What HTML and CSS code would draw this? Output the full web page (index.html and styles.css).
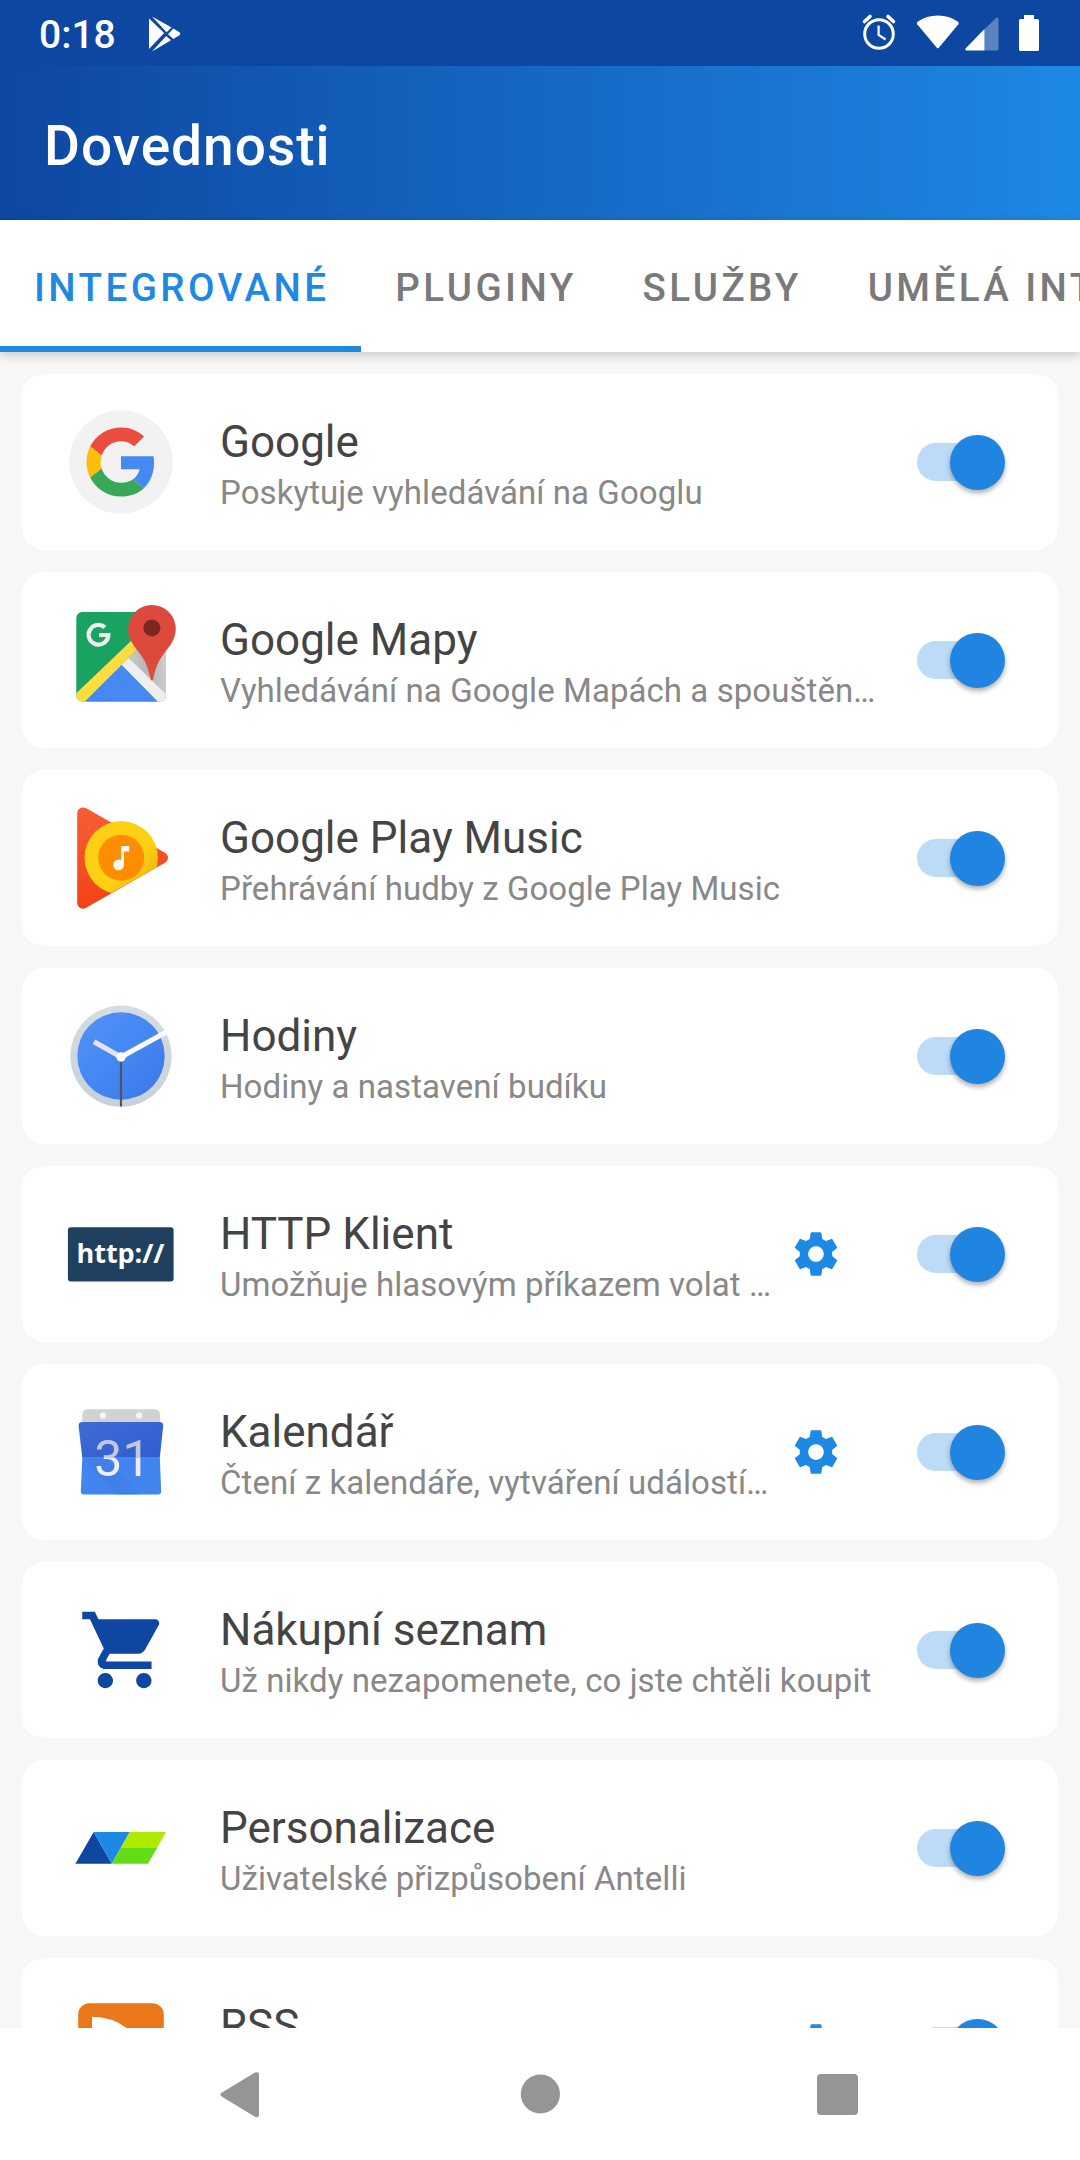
FILE: index.html
```html
<!DOCTYPE html>
<html lang="cs">
<head>
<meta charset="utf-8">
<title>Dovednosti</title>
<link rel="stylesheet" href="styles.css">
</head>
<body>
<svg class="defs" aria-hidden="true">
  <symbol id="gear" viewBox="0 0 24 24"><path d="M19.43 12.98c.04-.32.07-.64.07-.98s-.03-.66-.07-.98l2.11-1.65c.19-.15.24-.42.12-.64l-2-3.46c-.12-.22-.39-.3-.61-.22l-2.49 1c-.52-.4-1.08-.73-1.69-.98l-.38-2.65C14.46 2.18 14.25 2 14 2h-4c-.25 0-.46.18-.49.42l-.38 2.65c-.61.25-1.17.59-1.69.98l-2.49-1c-.23-.09-.49 0-.61.22l-2 3.46c-.13.22-.07.49.12.64l2.11 1.65c-.04.32-.07.65-.07.98s.03.66.07.98l-2.11 1.65c-.19.15-.24.42-.12.64l2 3.46c.12.22.39.3.61.22l2.49-1c.52.4 1.08.73 1.69.98l.38 2.65c.03.24.24.42.49.42h4c.25 0 .46-.18.49-.42l.38-2.65c.61-.25 1.17-.59 1.69-.98l2.49 1c.23.09.49 0 .61-.22l2-3.46c.12-.22.07-.49-.12-.64l-2.11-1.65zM12 15.6c-1.99 0-3.6-1.61-3.6-3.6s1.61-3.6 3.6-3.6 3.6 1.61 3.6 3.6-1.61 3.6-3.6 3.6z"/></symbol>
</svg>
<div class="screen">
  <div class="status">
    <span class="clock">0:18</span>
    <svg class="store" width="34" height="36" viewBox="0 0 34 36" fill="#fff"><path d="M1 2.5 16.2 17 1 33z"/><path d="M4 .6 23.6 11.6 18.6 16.2z"/><path d="M4 35.4 18.2 20 23 24.300z"/><path d="M25.400 12.600 31.500 16.300q1.800 1.400 0 2.900L25.400 23 20 18.200z"/></svg>
    <svg class="alarm" width="36" height="38" viewBox="0 0 36 38" fill="none" stroke="#fff"><circle cx="18" cy="21" r="14.300" stroke-width="3"/><path d="M17.600 12.500v9.500l7 4.500" stroke-width="2.200"/><path d="M3.500 8.500 9 3.500M32.500 8.500 27 3.500" stroke-width="3.600" stroke-linecap="round"/></svg>
    <svg class="wifi" width="44" height="34" viewBox="0 0 44 34" fill="#fff"><path d="M1.200 9.200Q.3 7.800 1.600 6.700 10.500.6 21.800.6T42 6.700q1.300 1.100.4 2.500L22.800 32.700q-1 1-2 0z"/></svg>
    <svg class="signal" width="34" height="34" viewBox="0 0 34 34" fill="#fff"><path d="M31.500.5Q33.500 0 33.500 1.500V32q0 1.500-1.500 1.500H19.500V12.300z" opacity=".32"/><path d="M19.500 12v21.500H1.500q-1.800-.5-1-2z"/></svg>
    <svg class="battery" width="20" height="36" viewBox="0 0 20 36" fill="#fff"><path d="M5 0h10v4h3.500Q20 4 20 5.500V34.500Q20 36 18.500 36h-17Q0 36 0 34.500V5.500Q0 4 1.500 4H5z"/></svg>
  </div>
  <header class="appbar"><h1>Dovednosti</h1></header>
  <nav class="tabs">
    <span class="tab active">INTEGROVANÉ</span><span class="tab">PLUGINY</span><span class="tab">SLUŽBY</span><span class="tab">UMĚLÁ INTELIGENCE</span>
  </nav>
  <main class="list">
    <section class="card">
      <svg class="icon" viewBox="0 0 110 110"><circle cx="55" cy="55" r="51.700" fill="#f2f2f2"/><g transform="translate(20.500 20.500) scale(1.4375)"><path fill="#ea4c3f" d="M24 9.500c3.540 0 6.710 1.220 9.210 3.600l6.850-6.850C35.900 2.380 30.470 0 24 0 14.620 0 6.510 5.380 2.560 13.220l7.980 6.190C12.430 13.720 17.740 9.500 24 9.500z"/><path fill="#4688f4" d="M46.980 24.550c0-1.570-.15-3.090-.38-4.550H24v9.020h12.940c-.58 2.960-2.260 5.480-4.780 7.180l7.730 6c4.510-4.180 7.090-10.360 7.090-17.650z"/><path fill="#fbbf0b" d="M10.530 28.590c-.48-1.450-.76-2.990-.76-4.590s.27-3.140.76-4.590l-7.980-6.190C.92 16.460 0 20.120 0 24c0 3.880.92 7.540 2.560 10.780l7.970-6.190z"/><path fill="#37a956" d="M24 48c6.480 0 11.930-2.130 15.890-5.810l-7.730-6c-2.150 1.450-4.920 2.300-8.160 2.300-6.260 0-11.570-4.220-13.470-9.910l-7.980 6.190C6.510 42.620 14.620 48 24 48z"/></g></svg>
      <div class="text"><h2>Google</h2><p>Poskytuje vyhledávání na Googlu</p></div>
      <i class="switch"></i>
    </section>
    <section class="card">
      <svg class="icon" viewBox="0 0 110 110">
        <defs><clipPath id="mapclip"><rect x="10.300" y="7" width="89.700" height="89.500" rx="6"/></clipPath><linearGradient id="mapgrey" x1="0" y1="0" x2="1" y2="0"><stop offset="0" stop-color="#c9c9c9"/><stop offset=".5" stop-color="#b5b5b5"/><stop offset="1" stop-color="#cdcdcd"/></linearGradient></defs>
        <g clip-path="url(#mapclip)"><rect x="10" y="7" width="90" height="90" fill="#1aa260"/><path d="M62.800 52.700 100 15v75z" fill="url(#mapgrey)"/><path d="M55.200 59.700 62.800 52.700 100 89.300V97h-8z" fill="#eee"/><path d="M19 97 55.200 59.700 91.800 97z" fill="#4688f4"/><path d="M10 88.500 66 35l5 9.500L18.500 97H10z" fill="#ffdc40"/></g>
        <path d="M39 22.300A9.900 9.900 0 1 0 42.400 30H33" fill="none" stroke="#eee" stroke-width="4.200"/>
        <path d="M85.900 0a23.900 23.900 0 0 0-23.900 23.900c0 10.500 6.500 17.300 12 24.900 6.500 8.800 8.600 15.700 10.700 25.700q1.200 2.200 2.400 0c2.100-10 4.200-16.900 10.700-25.700 5.500-7.600 12-14.400 12-24.900A23.900 23.900 0 0 0 85.900 0z" fill="#dd4a3d"/><circle cx="85.900" cy="23" r="8.500" fill="#7e2622"/>
      </svg>
      <div class="text"><h2>Google Mapy</h2><p>Vyhledávání na Google Mapách a spouštěn…</p></div>
      <i class="switch"></i>
    </section>
    <section class="card">
      <svg class="icon" viewBox="0 0 110 110">
        <defs><linearGradient id="pm" x1="0" y1="0" x2="0" y2="1"><stop offset="0" stop-color="#f65e35"/><stop offset="1" stop-color="#f44217"/></linearGradient><linearGradient id="py" x1="0" y1="0" x2="1" y2="1"><stop offset=".6" stop-color="#fed013"/><stop offset=".85" stop-color="#eab90e"/></linearGradient><clipPath id="pmclip"><path d="M0 0H110V53.800L0 115.200z"/></clipPath></defs>
        <path d="M11.200 10.500c0-5 4.800-7.500 9-5.200L98.500 49.500c4.700 2.700 4.700 7.900 0 10.600L20.200 104.800c-4.200 2.300-9-.2-9-5.200z" fill="url(#pm)"/>
        <circle cx="55.200" cy="54.800" r="36.700" fill="url(#py)" clip-path="url(#pmclip)"/>
        <circle cx="55.200" cy="54.800" r="23" fill="#ff8d00"/><path d="M55.200 43h8v5.500H58v13.400a5.400 5.400 0 1 1-2.800-4.700z" fill="#fafafa"/>
      </svg>
      <div class="text"><h2>Google Play Music</h2><p>Přehrávání hudby z Google Play Music</p></div>
      <i class="switch"></i>
    </section>
    <section class="card">
      <svg class="icon" viewBox="0 0 110 110">
        <defs><linearGradient id="ck" x1="0" y1="0" x2="1" y2="1"><stop offset="0" stop-color="#5392f7"/><stop offset=".5" stop-color="#4487f3"/><stop offset="1" stop-color="#3b78e4"/></linearGradient><linearGradient id="rim" x1="0" y1="0" x2="0" y2="1"><stop offset="0" stop-color="#d5dde0"/><stop offset="1" stop-color="#c8d1da"/></linearGradient></defs>
        <circle cx="55" cy="55.200" r="50.600" fill="url(#rim)"/><circle cx="55" cy="55" r="43.700" fill="url(#ck)"/>
        <path d="M55 56 28 40.700" stroke="#e4e4ea" stroke-width="5"/><path d="M55 56 100 31.200" stroke="#fafafa" stroke-width="5"/><path d="M55 56v49.500" stroke="#50545c" stroke-width="2.200"/><circle cx="55" cy="56" r="4.700" fill="#fff"/>
      </svg>
      <div class="text"><h2>Hodiny</h2><p>Hodiny a nastavení budíku</p></div>
      <i class="switch"></i>
    </section>
    <section class="card">
      <svg class="icon" viewBox="0 0 110 110"><rect x="1.900" y="28.200" width="105.700" height="54.300" rx="3" fill="#20405f"/><text x="10.500" y="63.600" class="http" textLength="88">http://</text></svg>
      <div class="text"><h2>HTTP Klient</h2><p>Umožňuje hlasovým příkazem volat …</p></div>
      <svg class="gear"><use href="#gear"/></svg>
      <i class="switch"></i>
    </section>
    <section class="card">
      <svg class="icon" viewBox="0 0 110 110">
        <defs><linearGradient id="cal" x1="0" y1="0" x2="1" y2="1"><stop offset="0" stop-color="#3f6bd6"/><stop offset="1" stop-color="#305ed0"/></linearGradient><linearGradient id="digits" gradientUnits="userSpaceOnUse" x1="0" y1="43" x2="0" y2="80"><stop offset="0" stop-color="#bfc6e0"/><stop offset=".478" stop-color="#c6cae0"/><stop offset=".478" stop-color="#ececf2"/><stop offset="1" stop-color="#f2f2f2"/></linearGradient></defs>
        <path d="M16.300 26V18q0-5.700 6-5.700H88q6 0 6 5.700v8z" fill="#d2d2d2"/><circle cx="37" cy="18.500" r="3.200" fill="#f5f5f5"/><circle cx="73.200" cy="18.500" r="3.200" fill="#f5f5f5"/>
        <path d="M16.300 60.700H93.800L95.200 94.500Q95.200 97.500 92 97.500H18Q14.800 97.500 14.800 94.500z" fill="#4285f1"/><path d="M16.300 60.700 50 97.400H72L40 60.700z" fill="#3e7de5" opacity=".6"/>
        <path d="M12.600 29Q12.300 25 16.500 25H93.300Q97.500 25 97.200 29L93.800 60.700H16.300z" fill="url(#cal)"/>
        <text x="28.300" y="79" class="day">31</text>
      </svg>
      <div class="text"><h2>Kalendář</h2><p>Čtení z kalendáře, vytváření událostí…</p></div>
      <svg class="gear"><use href="#gear"/></svg>
      <i class="switch"></i>
    </section>
    <section class="card">
      <svg class="icon" viewBox="0 0 110 110"><path transform="translate(12.400 9) scale(3.850 3.830)" fill="#0d47a1" d="M7 18c-1.100 0-1.990.9-1.990 2S5.900 22 7 22s2-.9 2-2-.9-2-2-2zM1 2v2h2l3.600 7.590-1.350 2.450c-.16.280-.25.610-.25.960 0 1.100.9 2 2 2h12v-2H7.420c-.14 0-.25-.11-.25-.25l.03-.12.9-1.630h7.450c.75 0 1.410-.41 1.750-1.030l3.580-6.490c.08-.14.12-.31.12-.48 0-.55-.45-1-1-1H5.210l-.94-2H1zm16 16c-1.100 0-1.990.9-1.990 2s.89 2 1.990 2 2-.9 2-2-.9-2-2-2z"/></svg>
      <div class="text"><h2>Nákupní seznam</h2><p>Už nikdy nezapomenete, co jste chtěli koupit</p></div>
      <i class="switch"></i>
    </section>
    <section class="card">
      <svg class="icon" viewBox="0 0 110 110"><path fill="#0d47a1" d="M9.400 70.700 27.700 39 45.700 70.700z"/><path fill="#1e88e5" d="M27.700 39H63.800L45.700 70.700z"/><path fill="#aeea00" d="M63.800 39H100L91 55H54.600z"/><path fill="#64dd17" d="M54.600 55H91L82 70.700H45.700z"/></svg>
      <div class="text"><h2>Personalizace</h2><p>Uživatelské přizpůsobení Antelli</p></div>
      <i class="switch"></i>
    </section>
    <section class="card">
      <svg class="icon" viewBox="0 0 110 110"><rect x="12.200" y="12.200" width="85.600" height="85.600" rx="11.500" fill="#ea7819"/><g fill="none" stroke="#fff" stroke-width="11"><path d="M26 31.200A53 53 0 0 1 79 84"/><path d="M26 50A34 34 0 0 1 60 84"/></g><circle cx="34" cy="76" r="8" fill="#fff"/></svg>
      <div class="text"><h2>RSS</h2><p>Čtení RSS</p></div>
      <svg class="gear"><use href="#gear"/></svg>
      <i class="switch"></i>
    </section>
  </main>
  <footer class="navbar">
    <svg width="50" height="50" viewBox="0 0 50 50"><path d="M4 23.500 37 3.600Q41 2 41 6V45.500Q41 49.500 37 47.800L4 27.800Q.8 25.600 4 23.500z"/></svg>
    <svg width="50" height="50" viewBox="0 0 50 50"><circle cx="25.400" cy="25" r="19.600"/></svg>
    <svg width="50" height="50" viewBox="0 0 50 50"><rect x="5" y="5" width="41" height="41" rx="4"/></svg>
  </footer>
</div>
</body>
</html>
```
FILE: styles.css
```css
* { box-sizing: border-box; }
body { margin: 0; font-family: Roboto, "Noto Sans", sans-serif; }
h1, h2, p { margin: 0; font-weight: 400; }
svg { display: block; flex: none; }
.defs { display: none; }

.screen {
  width: 1080px;
  height: 2160px;
  display: flex;
  flex-direction: column;
  overflow: hidden;
  background: #f7f7f7;
}

.status {
  flex: none;
  height: 66px;
  display: flex;
  align-items: center;
  padding: 0 41px 0 39px;
  background: #0d47a1;
  color: #fff;
}
.clock { width: 78px; font-size: 39px; line-height: 46px; font-weight: 500; padding-top: 4px; }
.store { margin-left: 31px; margin-top: 1px; }
.alarm { margin-left: auto; margin-top: -3px; }
.wifi { margin-left: 19px; margin-top: -2px; }
.signal { margin-left: 5px; margin-top: 1px; }
.battery { margin-left: 20px; }

.appbar {
  flex: none;
  height: 154px;
  display: flex;
  align-items: center;
  padding: 6px 44px 0;
  background: linear-gradient(90deg, #0d47a1, #1e88e5);
  color: #fff;
}
.appbar h1 { font-size: 55px; line-height: 64px; font-weight: 500; letter-spacing: 1px; }

.tabs {
  flex: none;
  position: relative;
  height: 132px;
  display: flex;
  background: #fff;
  box-shadow: 0 3px 10px rgba(0, 0, 0, .2);
  white-space: nowrap;
}
.tab {
  flex: none;
  padding: 45px 32px 0 34px;
  font-size: 38.500px;
  line-height: 45px;
  font-weight: 500;
  letter-spacing: 3.440px;
  color: #7a7a7a;
}
.tab.active { color: #1e88e5; border-bottom: 6px solid #1e88e5; }

.list {
  flex: 1;
  min-height: 0;
  overflow: hidden;
  display: flex;
  flex-direction: column;
  gap: 22px;
  padding: 22px 22px 0;
}
.card {
  flex: none;
  height: 176px;
  display: flex;
  align-items: center;
  padding: 0 53px 0 44px;
  border-radius: 22px;
  background: #fff;
}
.icon { width: 110px; height: 110px; }
.text { flex: 1; min-width: 0; margin: 4px 0 0 44px; white-space: nowrap; }
.text h2 { font-size: 44px; line-height: 52px; color: #444; }
.text p { margin-top: 5px; font-size: 33px; line-height: 40px; letter-spacing: .07px; color: #888; }
.gear { width: 52px; height: 52px; margin-right: 75px; fill: #1e88e5; }
.http { font: 700 27px "Open Sans", "Noto Sans", sans-serif; fill: #fff; }
.day { font: 400 50px Roboto, sans-serif; fill: url(#digits); }

.switch {
  flex: none;
  width: 88px;
  height: 38px;
  display: flex;
  align-items: center;
  justify-content: flex-end;
  border-radius: 19px;
  background: linear-gradient(90deg, #bbdbf7 60px, transparent 60px);
}
.switch::before {
  content: "";
  flex: none;
  width: 55px;
  height: 55px;
  border-radius: 50%;
  background: #1f85e1;
  box-shadow: 0 3px 5px rgba(0, 0, 0, .32);
}

.navbar {
  flex: none;
  height: 132px;
  display: flex;
  align-items: center;
  justify-content: center;
  gap: 247px;
  background: #fff;
  fill: #959595;
}
```
